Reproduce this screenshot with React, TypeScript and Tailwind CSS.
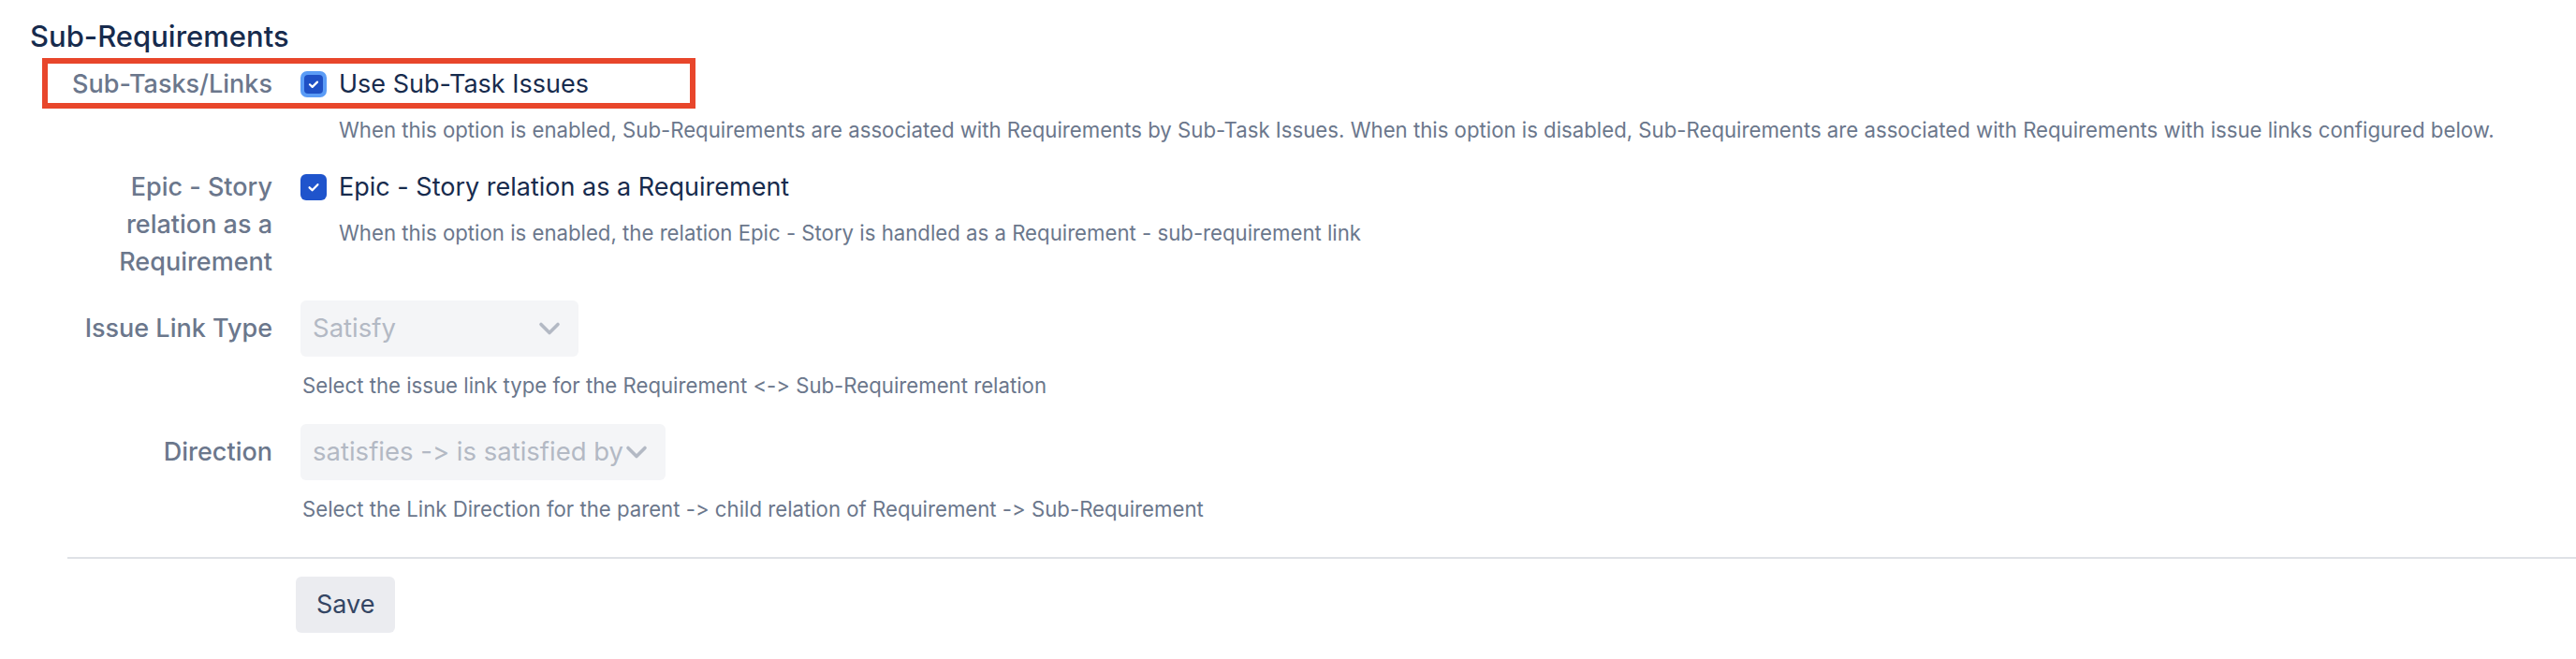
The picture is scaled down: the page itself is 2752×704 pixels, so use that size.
import React from "react";

const font = "font-['Inter','Noto_Sans',sans-serif] [font-variant-ligatures:none] [font-feature-settings:'calt'_0]";

function Check({ focused }: { focused?: boolean }) {
  if (focused) {
    return (
      <span className="flex h-[28px] w-[28px] shrink-0 items-center justify-center rounded-[7px] bg-[#5b9cf6]">
        <span className="flex h-[20px] w-[20px] items-center justify-center rounded-[4px] bg-[#1f50c5]">
          <svg width="14" height="14" viewBox="0 0 14 14" fill="none">
            <path d="M3 7.3l2.7 2.6L11 4.6" stroke="#fff" strokeWidth="2.2" strokeLinecap="round" strokeLinejoin="round" />
          </svg>
        </span>
      </span>
    );
  }
  return (
    <span className="flex h-[28px] w-[28px] shrink-0 items-center justify-center rounded-[6px] bg-[#1f54cc]">
      <svg width="16" height="16" viewBox="0 0 16 16" fill="none">
        <path d="M3.6 8.3l3 2.9 5.8-6" stroke="#fff" strokeWidth="2.3" strokeLinecap="round" strokeLinejoin="round" />
      </svg>
    </span>
  );
}

function Chevron() {
  return (
    <svg width="26" height="16" viewBox="0 0 26 16" fill="none" className="shrink-0">
      <path d="M4 3.5l9 9 9-9" stroke="#b3b9c4" strokeWidth="3.6" strokeLinecap="round" strokeLinejoin="round" />
    </svg>
  );
}

function Select({ value, width }: { value: string; width: string }) {
  return (
    <div className={`flex h-[60px] items-center rounded-[6px] bg-[#f4f5f7] pl-[13px] pr-[18px] ${width}`}>
      <span className="flex-1 overflow-hidden whitespace-nowrap text-[27.5px] text-[#b3b9c4]">{value}</span>
      <Chevron />
    </div>
  );
}

export default function App() {
  return (
    <div className={`min-h-screen w-full bg-white ${font}`}>
      <h2 className="pl-[32px] pt-[19px] text-[31px] font-medium leading-[40px] text-[#172b4d]">Sub-Requirements</h2>

      <div className="pl-[59px]">
        {/* Sub-Tasks/Links */}
        <div className="relative mt-[11px] grid grid-cols-[232px_1fr] gap-x-[30px]">
          <div className="pointer-events-none absolute left-[-14px] top-[-8px] h-[54px] w-[698px] border-[6px] border-[#e8462b]" />
          <div className="whitespace-nowrap text-right text-[27px] font-medium leading-[40px] text-[#6b778c]">Sub-Tasks/Links</div>
          <div>
            <label className="flex h-[40px] items-center gap-[13px]">
              <Check focused />
              <span className="text-[27px] text-[#172b4d]">Use Sub-Task Issues</span>
            </label>
            <p className="mt-[13px] pl-[41px] text-[22.2px] leading-[32px] text-[#6b778c]">
              When this option is enabled, Sub-Requirements are associated with Requirements by Sub-Task Issues. When this option is disabled, Sub-Requirements are associated with Requirements with issue links configured below.
            </p>
          </div>
        </div>

        {/* Epic - Story */}
        <div className="mt-[25px] grid grid-cols-[232px_1fr] gap-x-[30px]">
          <div className="text-right text-[27px] font-medium leading-[40px] text-[#6b778c]">Epic - Story relation as a Requirement</div>
          <div>
            <label className="flex h-[40px] items-center gap-[13px]">
              <Check />
              <span className="text-[27px] text-[#172b4d]">Epic - Story relation as a Requirement</span>
            </label>
            <p className="mt-[13px] pl-[41px] text-[22.2px] leading-[32px] text-[#6b778c]">
              When this option is enabled, the relation Epic - Story is handled as a Requirement - sub-requirement link
            </p>
          </div>
        </div>

        {/* Issue Link Type */}
        <div className="mt-[21px] grid grid-cols-[232px_1fr] gap-x-[30px]">
          <div className="flex h-[60px] items-center justify-end whitespace-nowrap text-[27px] font-medium text-[#6b778c]">Issue Link Type</div>
          <div>
            <Select value="Satisfy" width="w-[297px]" />
            <p className="mt-[15px] pl-[2px] text-[22.2px] leading-[32px] text-[#6b778c]">
              Select the issue link type for the Requirement &lt;-&gt; Sub-Requirement relation
            </p>
          </div>
        </div>

        {/* Direction */}
        <div className="mt-[25px] grid grid-cols-[232px_1fr] gap-x-[30px]">
          <div className="flex h-[60px] items-center justify-end text-[27px] font-medium text-[#6b778c]">Direction</div>
          <div>
            <Select value="satisfies -> is satisfied by" width="w-[390px]" />
            <p className="mt-[15px] pl-[2px] text-[22.2px] leading-[32px] text-[#6b778c]">
              Select the Link Direction for the parent -&gt; child relation of Requirement -&gt; Sub-Requirement
            </p>
          </div>
        </div>

        <div className="ml-[13px] mt-[35px] h-[2px] bg-[#dfe1e6]" />

        <div className="mt-[19px] pl-[257px]">
          <button type="button" className="h-[60px] rounded-[6px] bg-[#ebecf0] px-[22px] text-[27px] text-[#344563]">
            Save
          </button>
        </div>
      </div>
    </div>
  );
}
